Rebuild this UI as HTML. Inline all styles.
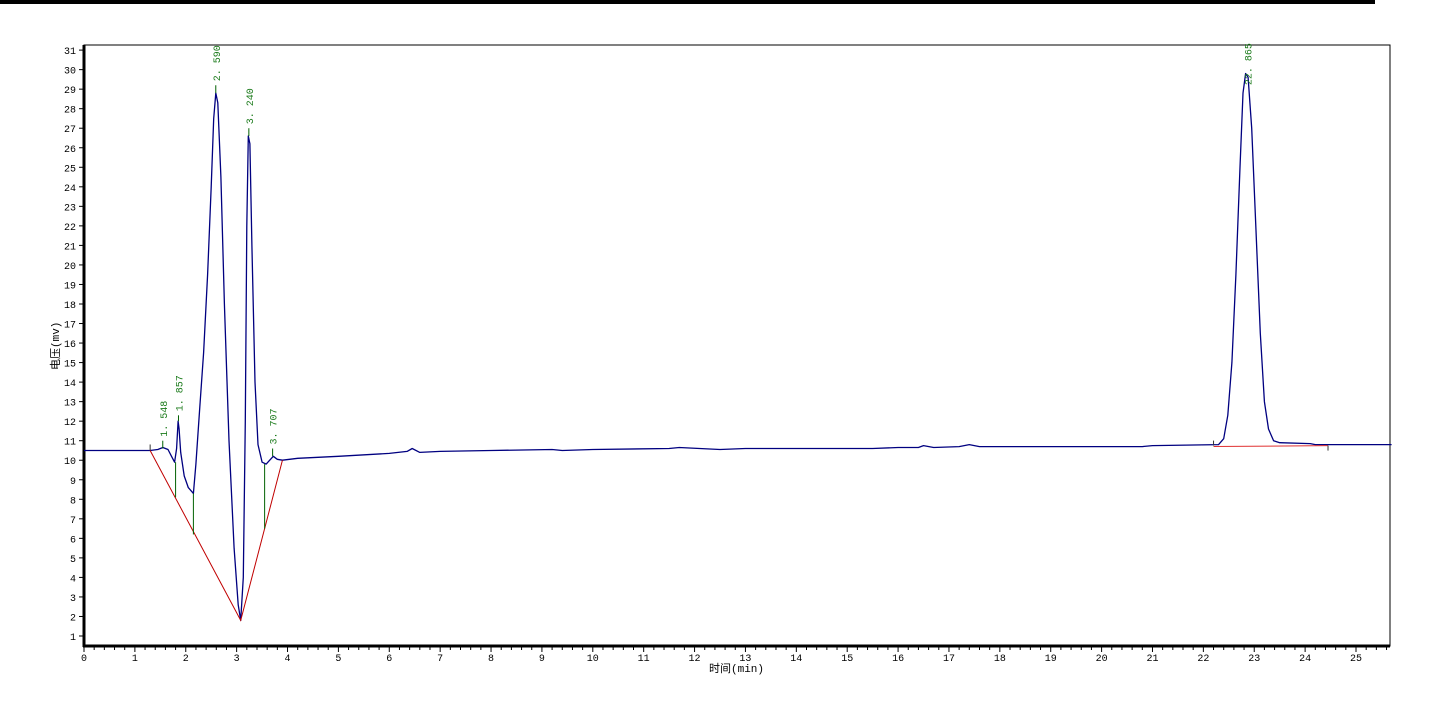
<!DOCTYPE html>
<html><head><meta charset="utf-8"><style>
html,body{margin:0;padding:0;background:#fff;width:1433px;height:702px;overflow:hidden}
svg{display:block}
text{font-family:"Liberation Mono","Noto Sans CJK SC",monospace}
</style></head><body>
<svg id="s" width="1433" height="702" xmlns="http://www.w3.org/2000/svg">
<rect x="0" y="0" width="1375" height="4" fill="#000"/>
<rect x="84" y="45" width="1306" height="601" fill="none" stroke="#000" stroke-width="1"/>
<line x1="84" y1="45" x2="84" y2="647" stroke="#000" stroke-width="3"/>
<line x1="83" y1="646" x2="1390" y2="646" stroke="#000" stroke-width="3"/>
<g id="ax"></g>
<text x="0" y="0" font-size="11" transform="translate(59,370) rotate(-90)" fill="#000">电压(mv)</text>
<text x="709" y="672" font-size="11" fill="#000">时间(min)</text>
<g id="pl"></g>
</svg>
<script>
var X=function(t){return 84+t*50.88},Y=function(v){return 636-(v-1)*19.53};
var ax=document.getElementById('ax'),pl=document.getElementById('pl'),h='';
for(var v=1;v<=31;v++){var y=Y(v);h+='<line x1="79" y1="'+y+'" x2="84" y2="'+y+'" stroke="#000"/>';
h+='<text x="76" y="'+(y+4)+'" font-size="10" text-anchor="end" font-family="Liberation Sans">'+v+'</text>';}
for(var i=0;i<=128;i++){var x=X(i*0.2);if(x>1390)break;var maj=i%5==0;
h+='<line x1="'+x+'" y1="646" x2="'+x+'" y2="'+(maj?652:650)+'" stroke="#000"/>';
if(maj)h+='<text x="'+x+'" y="661" font-size="10" text-anchor="middle" font-family="Liberation Sans">'+(i/5)+'</text>';}
ax.innerHTML=h;
var P=[[0,10.5],[1.3,10.5],[1.45,10.55],[1.55,10.65],[1.65,10.55],[1.72,10.2],[1.78,9.9],[1.82,10.6],[1.85,12],[1.87,11.6],[1.9,10.4],[1.97,9.2],[2.05,8.6],[2.15,8.3],[2.2,9.8],[2.27,12.5],[2.35,15.5],[2.43,19.5],[2.5,24],[2.55,27.5],[2.59,28.8],[2.63,28.3],[2.69,24.5],[2.76,18],[2.85,11],[2.95,5.5],[3.03,2.6],[3.08,1.8],[3.13,4],[3.17,12],[3.2,22],[3.23,26.6],[3.26,26.2],[3.3,21],[3.36,14],[3.42,10.8],[3.5,9.9],[3.58,9.8],[3.65,10.0],[3.72,10.2],[3.8,10.05],[3.9,10.0],[4.2,10.1],[5,10.2],[6,10.35],[6.35,10.45],[6.45,10.6],[6.6,10.4],[7,10.45],[8,10.5],[9.2,10.55],[9.4,10.5],[10,10.55],[11.5,10.6],[11.7,10.65],[12.1,10.6],[12.5,10.55],[13,10.6],[15.5,10.6],[16,10.65],[16.4,10.65],[16.5,10.75],[16.7,10.65],[17.2,10.7],[17.4,10.8],[17.6,10.7],[20.8,10.7],[21,10.75],[22.3,10.8],[22.4,11.1],[22.48,12.3],[22.56,15],[22.64,19.5],[22.72,25],[22.78,28.8],[22.83,29.8],[22.88,29.6],[22.95,27],[23.03,22],[23.12,16.5],[23.2,13],[23.28,11.6],[23.38,11.0],[23.5,10.9],[24.1,10.85],[24.2,10.8],[25.7,10.8]];
var d='M'+P.map(function(p){return X(p[0]).toFixed(1)+' '+Y(p[1]).toFixed(1)}).join(' L');
var g='<path d="'+d+'" fill="none" stroke="#000080" stroke-width="1.3" stroke-linejoin="round"/>';
g+='<polyline points="'+X(1.3)+','+Y(10.5)+' '+X(3.08)+','+Y(1.8)+' '+X(3.9)+','+Y(10.0)+'" fill="none" stroke="#c00000" stroke-width="1"/>';
g+='<line x1="'+X(22.2)+'" y1="'+Y(10.7)+'" x2="'+X(24.45)+'" y2="'+Y(10.75)+'" stroke="#e03030"/>';
[[1.8,9.9,8.1],[2.15,8.3,6.2],[3.55,9.8,6.5]].forEach(function(a){g+='<line x1="'+X(a[0])+'" y1="'+Y(a[1])+'" x2="'+X(a[0])+'" y2="'+Y(a[2])+'" stroke="#006000"/>';});
[[1.548,10.6,11.0],[1.857,12.0,12.3],[2.590,28.8,29.2],[3.240,26.6,27.0],[3.707,10.2,10.6],[22.865,29.8,29.0]].forEach(function(a){var x=X(a[0]);
g+='<line x1="'+x+'" y1="'+Y(a[1])+'" x2="'+x+'" y2="'+Y(Math.max(a[1],a[2]))+'" stroke="#006000"/>';
g+='<text font-size="10" fill="#1a7a1a" transform="translate('+(x+4)+','+(Y(a[2])-4)+') rotate(-90)">'+a[0].toFixed(3).replace('.', '. ')+'</text>';});
g+='<line x1="'+X(1.3)+'" y1="'+Y(10.5)+'" x2="'+X(1.3)+'" y2="'+(Y(10.5)-6)+'" stroke="#333"/>';
g+='<line x1="'+X(22.2)+'" y1="'+Y(10.75)+'" x2="'+X(22.2)+'" y2="'+(Y(10.75)-5)+'" stroke="#333"/>';
g+='<line x1="'+X(24.45)+'" y1="'+Y(10.75)+'" x2="'+X(24.45)+'" y2="'+(Y(10.75)+5)+'" stroke="#333"/>';
pl.innerHTML=g;
</script>
</body></html>
